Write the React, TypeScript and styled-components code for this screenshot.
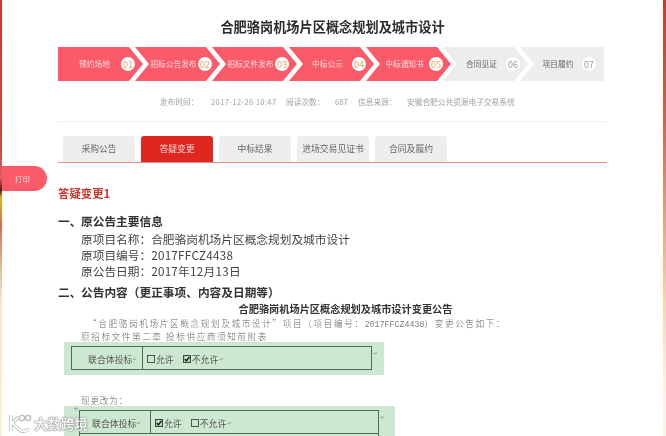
import React from "react";
import styled, { createGlobalStyle } from "styled-components";

const Global = createGlobalStyle`
  html, body { margin: 0; padding: 0; height: 436px; overflow: hidden; background: #fff; }
  #root { height: 436px; }
  * { box-sizing: border-box; }
`;
const FONT = `"Noto Sans CJK SC", "Noto Sans", sans-serif`;
const COLON = "\uFF1A";
const LP = "\uFF08";
const RP = "\uFF09";

const Shell = styled.div`display: flex; width: 666px; height: 436px; overflow: hidden; font-family: ${FONT};`;
const LeftEdge = styled.div`
  width: 2px; flex: none;
  background: linear-gradient(#c8382c 0, #cf4a3c 150px, #e0605a 178px, #4a1a10 190px, #e8b020 198px, #d86a50 225px, #d9b08c 260px, #fde4c4 300px, #fdeedd 436px);
`;
const RightEdge = styled.div`
  width: 3px; flex: none;
  background: linear-gradient(#c63c2c 0, #d2604e 120px, #e89a80 210px, #fbd2ac 300px, #fdf0dc 380px, #fdf4e8 436px);
`;
const Page = styled.main`flex: 1; position: relative; padding-left: 56px; background: #fff; filter: blur(0.4px); overflow: hidden;`;
const Column = styled.div`width: 549px;`;
const Title = styled.h1`
  margin: 0; padding-top: 17px; height: 47px; line-height: 20px; font-size: 13.2px; font-weight: 700;
  color: #2b2b2b; text-align: center;
`;

const Steps = styled.ol`display: flex; list-style: none; margin: 0; padding: 0; height: 34px; width: 547px;`;
const Step = styled.li<{ $on: boolean; $first?: boolean; $last?: boolean }>`
  width: ${(p) => (p.$last ? "84px" : "85px")}; flex: none; height: 34px;
  margin-left: ${(p) => (p.$first ? "0" : "-8px")};
  padding: 0 8px 0 ${(p) => (p.$first ? "10px" : "14px")}; display: flex; align-items: center;
  background: ${(p) => (p.$on ? "#fb5b68" : "#ededed")};
  color: ${(p) => (p.$on ? "#fbdcdc" : "#666")};
  clip-path: ${(p) =>
    p.$last
      ? "polygon(0 0, 100% 0, 100% 100%, 0 100%, 14px 50%)"
      : p.$first
      ? "polygon(0 0, 71px 0, 85px 50%, 71px 100%, 0 100%)"
      : "polygon(0 0, 71px 0, 85px 50%, 71px 100%, 0 100%, 14px 50%)"};
`;
const StepLabel = styled.span`flex: 1; text-align: center; font-size: 7.7px; line-height: 12px; white-space: nowrap;`;
const Badge = styled.span<{ $on: boolean }>`
  width: 14px; height: 14px; border-radius: 50%; background: #fff; flex: none;
  display: flex; align-items: center; justify-content: center; font-size: 9px;
  color: ${(p) => (p.$on ? "#e6a860" : "#999")};
`;

const Meta = styled.div`
  display: flex; align-items: center; height: 41px; padding: 0 0 0 102px; border-bottom: 1px solid #efefef;
  font-size: 7.7px; color: #a2a2a2; white-space: nowrap;
`;
const MetaLabel = styled.span`width: 51px;`;
const MetaShortLabel = styled.span`width: 49px;`;
const MetaValue = styled.span<{ $w: number; $sp?: number }>`
  width: ${(p) => p.$w}px; letter-spacing: ${(p) => p.$sp ?? 0}px;
`;

const Tabs = styled.nav`
  display: flex; gap: 6px; margin-top: 14px; height: 27px; padding-left: 5px; border-bottom: 1px solid #e98a88;
`;
const Tab = styled.div<{ $on?: boolean }>`
  width: 72px; height: 26px; border-radius: 3px 3px 0 0; font-size: 8.8px; line-height: 26px; text-align: center;
  background: ${(p) => (p.$on ? "#e0271f" : "#eeeeee")};
  color: ${(p) => (p.$on ? "#fbd9d6" : "#666")};
`;
const Print = styled.div`
  position: absolute; left: 0; top: 166px; width: 45px; height: 25px; border-radius: 0 13px 13px 0;
  background: #fb5b68; color: #fde0e0; font-size: 7.4px; line-height: 25px; padding-left: 13px;
`;

const ChangeTitle = styled.h2`margin: 22px 0 0; font-size: 11.4px; line-height: 17px; font-weight: 700; color: #c9352c;`;
const SectionHead = styled.h3<{ $gap: number }>`
  margin: ${(p) => p.$gap}px 0 0; font-size: 11.7px; line-height: 16px; font-weight: 700; color: #333;
  display: flex;
`;
const Num = styled.span`width: 23px; flex: none;`;
const InfoList = styled.div`margin: 2px 0 0 23px;`;
const InfoLine = styled.p`margin: 0; font-size: 11.7px; line-height: 16px; color: #444;`;
const InfoNumber = styled.span`letter-spacing: 0.25px;`;
const DocTitle = styled.div`font-size: 10.2px; line-height: 16px; font-weight: 700; color: #333; text-align: center; padding-left: 26px; margin-top: 1px;`;
const DocLine = styled.p<{ $h: number; $indent: number; $sp: number }>`
  margin: 0; padding-left: ${(p) => p.$indent}px; height: ${(p) => p.$h}px; line-height: ${(p) => p.$h}px;
  font-size: 8.6px; font-weight: 300; letter-spacing: ${(p) => p.$sp}px; color: #666; white-space: nowrap;
`;
const AltLine = styled(DocLine)`padding-top: 19px; height: 31px; line-height: 12px;`;
const Quote = styled.span`font-feature-settings: "fwid";`;
const Latin = styled.span`font-family: "Liberation Mono", monospace; font-size: 8.3px; letter-spacing: 0; color: #808080;`;
const Band = styled.div<{ $w: number; $h: number; $pad: number }>`
  margin-left: 6px; width: ${(p) => p.$w}px; height: ${(p) => p.$h}px; background: #cde8d1;
  padding: 4px 0 0 ${(p) => p.$pad}px; position: relative;
`;
const Grid = styled.div<{ $w: number; $label: number }>`
  width: ${(p) => p.$w}px; height: 24px; display: grid; grid-template-columns: ${(p) => p.$label}px 1fr;
  border: 1px solid #4d6b58; position: relative; font-size: 8.9px; color: #555;
`;
const LabelCell = styled.div<{ $pr: number }>`
  border-right: 1px solid #4d6b58; display: flex; align-items: center; justify-content: flex-end;
  padding: 2px ${(p) => p.$pr}px 0 0; white-space: nowrap;
`;
const OptionCell = styled.div`display: flex; align-items: center; gap: 9px; padding: 2px 0 0 4px;`;
const Option = styled.span`display: inline-flex; align-items: center; gap: 1px; white-space: nowrap;`;
const Box = styled.svg`width: 8px; height: 8px; flex: none;`;
const Ret = styled.span`font-size: 5.5px; color: #7a9a85; font-family: "DejaVu Sans", sans-serif;`;
const CornerRet = styled(Ret)`position: absolute; top: 3px; right: -7px;`;
const Handle = styled.span`position: absolute; left: 9px; top: -1px; color: #6a86b8; font-size: 7px; line-height: 8px; font-family: "DejaVu Sans", sans-serif;`;
const NextRow = styled.div<{ $w: number }>`width: ${(p) => p.$w}px; height: 4px; border: solid #4d6b58; border-width: 0 1px;`;

const Watermark = styled.div`
  position: absolute; left: 5px; top: 412px; display: flex; align-items: center;
  color: rgba(255,255,255,.92); font-size: 13.5px; line-height: 22px; font-weight: 700; white-space: nowrap;
  text-shadow: 0 0 1px #777, 0 0 1px #888, 0 0 2px #aaa;
`;
const Logo = styled.svg`width: 27px; height: 22px; flex: none;`;

const steps = [
  ["预约场地", "01", true], ["招标公告发布", "02", true], ["招标文件发布", "03", true], ["中标公示", "04", true],
  ["中标通知书", "05", true], ["合同见证", "06", false], ["项目履约", "07", false],
] as const;
const tabs = ["采购公告", "答疑变更", "中标结果", "进场交易见证书", "合同及履约"];

function Check({ on }: { on: boolean }) {
  return (
    <Box viewBox="0 0 8 8">
      <rect x="0.5" y="0.5" width="7" height="7" fill="none" stroke="#3a4a40" strokeWidth={on ? 1.3 : 0.9} />
      {on && <path d="M1.8 4 L3.4 5.8 L6.4 2" fill="none" stroke="#222" strokeWidth="1.5" />}
    </Box>
  );
}

function FormRow({ w, label, pr, first, second }: { w: number; label: number; pr: number; first: boolean; second: boolean }) {
  return (
    <Grid $w={w} $label={label}>
      <LabelCell $pr={pr}>联合体投标<Ret>↵</Ret></LabelCell>
      <OptionCell>
        <Option><Check on={first} />允许</Option>
        <Option><Check on={second} />不允许<Ret>↵</Ret></Option>
      </OptionCell>
      <CornerRet>↵</CornerRet>
    </Grid>
  );
}

export default function App() {
  return (
    <Shell>
      <Global />
      <LeftEdge />
      <Page>
        <Column>
          <Title>合肥骆岗机场片区概念规划及城市设计</Title>
          <Steps>
            {steps.map(([label, n, on], i) => (
              <Step key={n} $on={on} $first={i === 0} $last={i === 6}>
                <StepLabel>{label}</StepLabel>
                <Badge $on={on}>{n}</Badge>
              </Step>
            ))}
          </Steps>
          <Meta>
            <MetaLabel>发布时间{COLON}</MetaLabel>
            <MetaValue $w={75} $sp={0.32}>2017-12-26 10:47</MetaValue>
            <MetaShortLabel>阅读次数{COLON}</MetaShortLabel>
            <MetaValue $w={23}>687</MetaValue>
            <MetaShortLabel>信息来源{COLON}</MetaShortLabel>
            <span>安徽合肥公共资源电子交易系统</span>
          </Meta>
          <Tabs>
            {tabs.map((t, i) => <Tab key={t} $on={i === 1}>{t}</Tab>)}
          </Tabs>
          <ChangeTitle>答疑变更1</ChangeTitle>
          <SectionHead $gap={11}><Num>一、</Num>原公告主要信息</SectionHead>
          <InfoList>
            <InfoLine>原项目名称{COLON}合肥骆岗机场片区概念规划及城市设计</InfoLine>
            <InfoLine>原项目编号{COLON}<InfoNumber>2017FFCZ4438</InfoNumber></InfoLine>
            <InfoLine>原公告日期{COLON}<InfoNumber>2017年12月13日</InfoNumber></InfoLine>
          </InfoList>
          <SectionHead $gap={5}><Num>二、</Num>公告内容{LP}更正事项、内容及日期等{RP}</SectionHead>
          <DocTitle>合肥骆岗机场片区概念规划及城市设计变更公告</DocTitle>
          <DocLine $h={13} $indent={30} $sp={1.65}>
            <Quote>“</Quote>合肥骆岗机场片区概念规划及城市设计<Quote>”</Quote>项目{LP}项目编号{COLON}<Latin>2017FFCZ4438</Latin>{RP}变更公告如下{COLON}
          </DocLine>
          <DocLine $h={12} $indent={23} $sp={1.6}>原招标文件第二章 投标供应商须知前附表</DocLine>
          <Band $w={320} $h={33} $pad={7}>
            <FormRow w={301} label={71} pr={5} first={false} second={true} />
          </Band>
          <AltLine $h={31} $indent={23} $sp={0.8}>现更改为{COLON}</AltLine>
          <Band $w={331} $h={40} $pad={15}>
            <Handle>+</Handle>
            <FormRow w={300} label={71} pr={9} first={true} second={false} />
            <NextRow $w={300} />
          </Band>
        </Column>
        <Print>打印</Print>
        <Watermark>
          <Logo viewBox="0 0 27 22">
            <path d="M4 3 L4 19 M12 5 L5 11 L14 19 Q19 20 22 17" fill="none" stroke="#999" strokeWidth="3" />
            <path d="M4 3 L4 19 M12 5 L5 11 L14 19 Q19 20 22 17" fill="none" stroke="#fff" strokeWidth="2" />
            <circle cx="15" cy="6" r="2.6" fill="none" stroke="#bbb" strokeWidth="1.3" />
            <circle cx="21" cy="6" r="2.6" fill="none" stroke="#bbb" strokeWidth="1.3" />
          </Logo>
          大数跨境
        </Watermark>
      </Page>
      <RightEdge />
    </Shell>
  );
}
